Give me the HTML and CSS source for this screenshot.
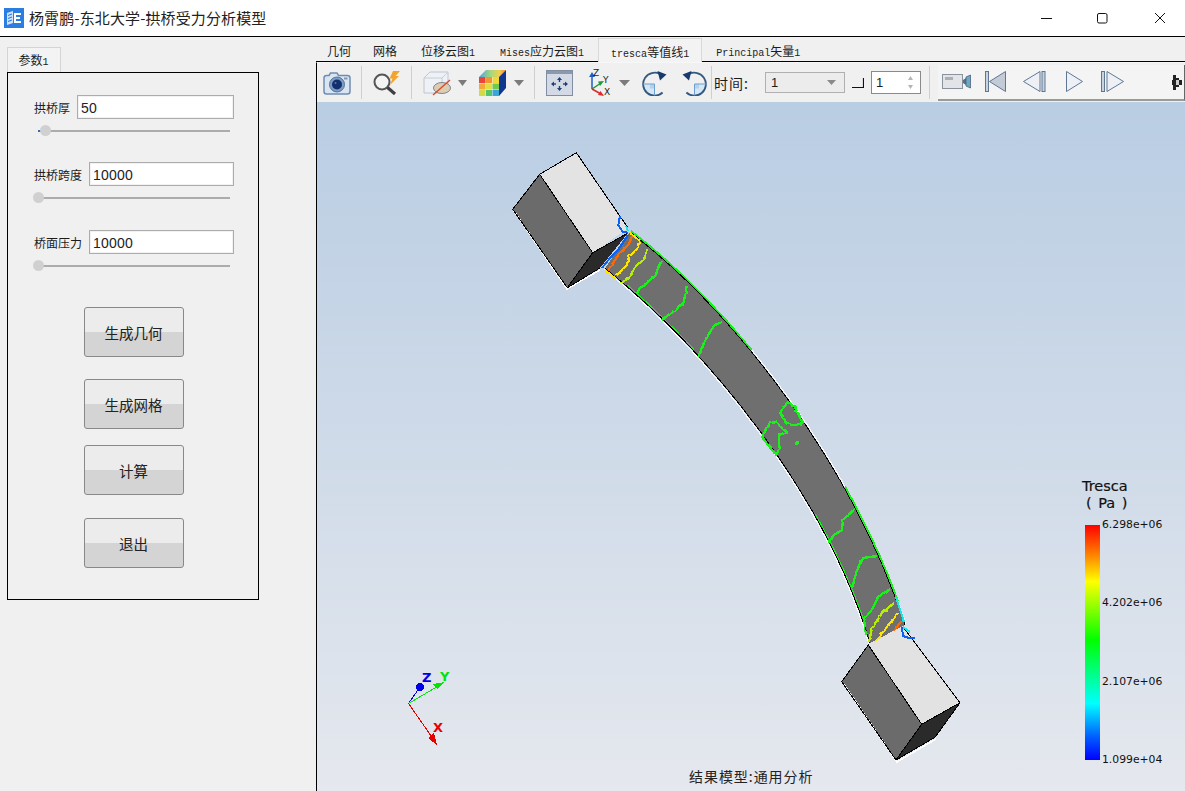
FILE: index.html
```html
<!DOCTYPE html>
<html lang="zh">
<head>
<meta charset="utf-8">
<title>杨霄鹏-东北大学-拱桥受力分析模型</title>
<link rel="stylesheet" href="styles.css">
</head>
<body>
<div class="window">
  <header class="titlebar">
    <svg class="app-icon" width="20" height="20" viewBox="0 0 20 20">
      <rect width="20" height="20" fill="#2b7de2"/>
      <path d="M3 5 9 3 9 15 3 17Z" fill="#cfe2fa"/>
      <path d="M4 7.500 8 6M4 10.500 8 9M4 13.500 8 12" stroke="#2b7de2" stroke-width="1.200"/>
      <path d="M10 5h7v2h-5v2h4v2h-4v2h5v2h-7Z" fill="#fff"/>
    </svg>
    <h1 class="app-title">杨霄鹏-东北大学-拱桥受力分析模型</h1>
    <div class="win-controls">
      <svg width="12" height="12" viewBox="0 0 12 12"><path d="M1 6.500H12" stroke="#111"/></svg>
      <svg width="12" height="12" viewBox="0 0 12 12"><rect x=".5" y="1.500" width="9.500" height="9.500" rx="1.500" fill="none" stroke="#111"/></svg>
      <svg width="12" height="12" viewBox="0 0 12 12"><path d="M1 1 11 11M11 1 1 11" stroke="#111"/></svg>
    </div>
  </header>

  <div class="workspace">
    <aside class="sidebar">
      <div class="side-tab">参数<span class="lat">1</span></div>
      <section class="side-panel">
        <div class="param param-first">
          <div class="param-row"><label class="param-label">拱桥厚</label><input class="param-input" value="50"></div>
          <div class="slider"><span class="slider-mark"></span><span class="slider-knob knob-offset"></span></div>
        </div>
        <div class="param">
          <div class="param-row"><label class="param-label">拱桥跨度</label><input class="param-input" value="10000"></div>
          <div class="slider"><span class="slider-knob"></span></div>
        </div>
        <div class="param">
          <div class="param-row"><label class="param-label">桥面压力</label><input class="param-input" value="10000"></div>
          <div class="slider"><span class="slider-knob"></span></div>
        </div>
        <div class="actions">
          <button class="action action-1">生成几何</button>
          <button class="action action-2">生成网格</button>
          <button class="action action-3">计算</button>
          <button class="action action-4">退出</button>
        </div>
      </section>
    </aside>

    <main class="result">
      <nav class="tabs">
        <span class="tab">几何</span>
        <span class="tab tab-b">网格</span>
        <span class="tab">位移云图<span class="lat">1</span></span>
        <span class="tab tab-d"><span class="lat">Mises</span>应力云图<span class="lat">1</span></span>
        <span class="tab tab-active"><span class="lat">tresca</span>等值线<span class="lat">1</span></span>
        <span class="tab tab-f"><span class="lat">Principal</span>矢量<span class="lat">1</span></span>
      </nav>

      <div class="toolbar">
        <svg class="ml6" width="28" height="24" viewBox="0 0 28 24">
          <path d="M3.500 4.500H6L7.500 2H14L15.500 4.500H24.500Q27 4.500 27 7V20.500Q27 23 24.500 23H3.500Q1 23 1 20.500V7Q1 4.500 3.500 4.500Z" fill="#dbe5f0" stroke="#6f8db2" stroke-width="1.500"/>
          <rect x="21" y="6.500" width="3.500" height="2" fill="#7e99bb"/>
          <circle cx="14" cy="13.500" r="7.500" fill="#7d9dc2" stroke="#4e75a4"/>
          <circle cx="14" cy="13.500" r="5" fill="#12306d"/>
          <circle cx="12.500" cy="12" r="1" fill="#5a7cb0"/>
        </svg>
        <span class="sep ml10"></span>
        <svg class="ml10" width="29" height="25" viewBox="0 0 29 25">
          <circle cx="10" cy="12" r="7.500" fill="#f2f4f6" stroke="#555" stroke-width="2"/>
          <path d="M15.500 17.500 23 24" stroke="#3f3f3f" stroke-width="3.200"/>
          <path d="M21 1 28 1 23.500 6 27 6 18 15 20.500 8.500 17.500 8.500Z" fill="#f4a42c"/>
        </svg>
        <span class="sep ml10"></span>
        <svg class="ml11" width="29" height="26" viewBox="0 0 29 26">
          <path d="M1 8 7 2H25V17L19 23H1Z" fill="#eef1f5" stroke="#bcc6d1"/>
          <path d="M1 8H19V23M19 8 25 2" fill="none" stroke="#c6ced8"/>
          <ellipse cx="19" cy="18" rx="8.500" ry="5.500" fill="#dccdb0" stroke="#7f8894"/>
          <path d="M10 25 27 10" stroke="#d8482c" stroke-width="1.300"/>
        </svg>
        <svg class="ml6" width="9" height="6" viewBox="0 0 9 6"><path d="M0 0H9L4.500 6Z" fill="#7b7b7b"/></svg>
        <svg class="ml12" width="27" height="26" viewBox="0 0 27 26">
          <defs>
            <linearGradient id="cubeTop" x1="0" x2="1" y1="0" y2="0"><stop offset="0" stop-color="#4aa8e0"/><stop offset=".45" stop-color="#a8d878"/><stop offset=".75" stop-color="#f0d050"/><stop offset="1" stop-color="#ee8a48"/></linearGradient>
          </defs>
          <path d="M7 0H27L20 7H0Z" fill="url(#cubeTop)"/>
          <path d="M20 7 27 0V18L20 26Z" fill="#10368d"/>
          <rect x="0" y="7" width="6.500" height="6" fill="#e9453a"/><rect x="7" y="7" width="6" height="6" fill="#f29431"/><rect x="13.500" y="7" width="6.500" height="6" fill="#f2d83a"/>
          <rect x="0" y="13.500" width="6.500" height="6" fill="#f2a83a"/><rect x="7" y="13.500" width="6" height="6" fill="#e6dd3f"/><rect x="13.500" y="13.500" width="6.500" height="6" fill="#73c94d"/>
          <rect x="0" y="20" width="6.500" height="6" fill="#d3d94a"/><rect x="7" y="20" width="6" height="6" fill="#54c469"/><rect x="13.500" y="20" width="6.500" height="6" fill="#3aa6d6"/>
        </svg>
        <svg class="ml8" width="10" height="6" viewBox="0 0 10 6"><path d="M0 0H10L5 6Z" fill="#7b7b7b"/></svg>
        <span class="sep ml10"></span>
        <svg class="ml11" width="27" height="26" viewBox="0 0 27 26">
          <rect x=".5" y=".5" width="26" height="25" fill="#d3dae5" stroke="#7f8ea3"/>
          <rect x="1" y="1" width="25" height="3" fill="#8c99ac"/>
          <g fill="#1f3f6f">
            <path d="M13.500 7 16 10H11ZM13.500 21 11 18H16ZM5 14 8 11.500V16.500ZM22 14 19 16.500V11.500Z"/>
            <rect x="12.800" y="10" width="1.400" height="2"/><rect x="12.800" y="16" width="1.400" height="2"/><rect x="8" y="13.300" width="2" height="1.400"/><rect x="17" y="13.300" width="2" height="1.400"/>
          </g>
        </svg>
        <svg class="ml16 tb-axes" width="23" height="28" viewBox="0 0 23 28">
          <path d="M3 20V7" stroke="#1d5fc4" stroke-width="1.500"/><path d="M3 3 6 8H0Z" fill="#1d5fc4"/>
          <path d="M3 20 12 14" stroke="#1d9a3a" stroke-width="1.500"/><path d="M15 12 11 17 9 12.500Z" fill="#1d9a3a"/>
          <path d="M3 20 12 25" stroke="#dd2a2a" stroke-width="1.500"/><path d="M15 27 9 26 11.500 22Z" fill="#dd2a2a"/>
          <text x="4" y="7" class="axis-mini">Z</text><text x="14" y="14" class="axis-mini">Y</text><text x="15" y="26" class="axis-mini">X</text>
        </svg>
        <svg class="ml7" width="11" height="6" viewBox="0 0 11 6"><path d="M0 0H11L5.500 6Z" fill="#7b7b7b"/></svg>
        <svg class="ml12" width="25" height="26" viewBox="0 0 25 26">
          <path d="M12.500 14H1A11.500 11.500 0 0 0 12.500 25.500Z" fill="#d5e6f5"/>
          <rect x="8" y="14" width="4.500" height="4.500" fill="#b5d2ec"/>
          <path d="M20.600 22.500A11.500 11.500 0 1 1 18 4" fill="none" stroke="#34597f" stroke-width="1.800"/>
          <path d="M1 14H12.500V25.500" fill="none" stroke="#6ea0cf"/>
          <path d="M15.500 1 24.500 4.500 18 10.500Z" fill="#173a6f"/>
        </svg>
        <svg class="ml14" width="26" height="26" viewBox="0 0 26 26">
          <path d="M13.500 14H25A11.500 11.500 0 0 1 13.500 25.500Z" fill="#d5e6f5"/>
          <rect x="13.500" y="14" width="4.500" height="4.500" fill="#b5d2ec"/>
          <path d="M5.400 22.500A11.500 11.500 0 1 0 8 4" fill="none" stroke="#34597f" stroke-width="1.800"/>
          <path d="M25 14H13.500V25.500" fill="none" stroke="#6ea0cf"/>
          <path d="M10.500 1 1.500 4.500 8 10.500Z" fill="#173a6f"/>
        </svg>
        <span class="sep ml4"></span>
        <span class="tb-label">时间:</span>
        <div class="combo"><span>1</span><svg width="9" height="5" viewBox="0 0 9 5"><path d="M0 0H9L4.500 5Z" fill="#8a8a8a"/></svg></div>
        <svg class="ml7" width="12" height="10" viewBox="0 0 12 10"><path d="M0 9.500H11.500V0" fill="none" stroke="#111" stroke-width="1.200"/></svg>
        <div class="spin"><span>1</span><svg width="5" height="13" viewBox="0 0 5 13"><path d="M2.500 0 5 4H0ZM2.500 13 0 9H5Z" fill="#b5b5b5"/></svg></div>
        <span class="sep ml8"></span>
        <div class="player">
          <svg width="29" height="15" viewBox="0 0 29 15">
            <rect x=".5" y=".5" width="20" height="14" fill="#e2e4e7" stroke="#8a929c"/>
            <rect x="3" y="3" width="8" height="3" fill="#aab0b8"/>
            <path d="M21 6 24 4V11L21 9Z" fill="#5a6d85"/>
            <path d="M24 3 28.500 1V14L24 12Z" fill="#6aa8c8" stroke="#4e627c" stroke-width=".8"/>
          </svg>
          <svg class="ml14" width="21" height="21" viewBox="0 0 21 21"><rect x=".5" y=".5" width="3" height="20" fill="#c8d3df" stroke="#5f7793"/><path d="M20.500 .5V20.500L4.500 10.500Z" fill="#c3ccd6" stroke="#5f7793"/></svg>
          <svg class="ml17" width="23" height="21" viewBox="0 0 23 21"><path d="M17 .5V20.500L.5 10.500Z" fill="#edf1f6" stroke="#5f7793"/><rect x="19" y=".5" width="3" height="20" fill="#c8d3df" stroke="#5f7793"/></svg>
          <svg class="ml20" width="17" height="21" viewBox="0 0 17 21"><path d="M.5 .5V20.500L16.500 10.500Z" fill="#edf1f6" stroke="#5f7793"/></svg>
          <svg class="ml18" width="23" height="21" viewBox="0 0 23 21"><rect x=".5" y=".5" width="3" height="20" fill="#c8d3df" stroke="#5f7793"/><path d="M6 .5V20.500L22.500 10.500Z" fill="#edf1f6" stroke="#5f7793"/></svg>
          <svg class="player-end" width="11" height="18" viewBox="0 0 11 18"><path d="M1 2H4V5H7V7H10V12H7V14H4V17H1V12H0V7H1Z" fill="#222"/><path d="M4 7H7V12H4Z" fill="#ccc"/></svg>
        </div>
      </div>

      <div class="viewport">
        <svg class="scene" width="868" height="689" viewBox="317 102 868 689">
          <defs>
            <filter id="jag" filterUnits="userSpaceOnUse" x="500" y="150" width="500" height="600">
              <feTurbulence type="fractalNoise" baseFrequency=".22" numOctaves="1" seed="4"/>
              <feDisplacementMap in="SourceGraphic" scale="3" xChannelSelector="R" yChannelSelector="G"/>
            </filter>
          </defs>
          <!-- left block -->
          <path d="M539.700 174.300 576.300 152.700 628.300 228.300 592.700 252.700Z" fill="#e3e3e3"/>
          <path d="M512.700 209.300 539.700 174.300 592.700 252.700 567.300 287.700Z" fill="#6b6b6b"/>
          <path d="M592.700 252.700 628 233 600 268 567.300 287.700Z" fill="#2a2a2a"/>
          <path d="M514 211 567 289 600 270" fill="none" stroke="#fff" stroke-width="1.500"/>
          <path d="M592.700 252.700 539.700 174.300 576.300 152.700 628.300 228.300M539.700 174.300 512.700 209.300 567.300 287.700 592.700 252.700 628 233M567.300 287.700 600 268" fill="none" stroke="#000"/>
          <!-- beam -->
          <path d="M630 232C736 313 853 466 905 625L870 643C824 490 705 348 605 268.300Z" fill="#6f6f6f"/>
          <path class="edge-white-up" d="M630 232C736 313 853 466 905 625" fill="none" stroke="#fff"/>
          <path class="edge-white-down" d="M605 268.300C705 348 824 490 870 643" fill="none" stroke="#fff"/>
          <path d="M630 232C736 313 853 466 905 625" fill="none" stroke="#000"/>
          <path d="M605 268.300C705 348 824 490 870 643" fill="none" stroke="#000"/>
          <path class="edge-green" d="M630 232C736 313 853 466 905 625" pathLength="100" stroke-dasharray="35 34 26 100" fill="none" stroke="#1ef01e" stroke-width="1.800"/>
          <path class="edge-green" d="M605 268.300C705 348 824 490 870 643" pathLength="100" stroke-dasharray="0 6 20 44 25 100" fill="none" stroke="#1ef01e"/>
          <!-- contours -->
          <g class="contours" fill="none" stroke-width="2.300" stroke-linejoin="round">
            <g stroke="#1ef01e">
              <path d="M661.700 260.700 658 268 656 275 650 280 645 285 640 288 636.700 294"/>
              <path d="M686.700 285.700 685 296 683.300 303.300 676 310 668.300 315 661.700 320"/>
              <path d="M721.700 321.700 714 326 708.300 335 703 345 698.300 356.700"/>
              <path d="M803 423 795 425 787 424 780 413 788 402 795 407 803 423"/>
              <path d="M762 437 770 423 776 422 782 428 787 432 779 435 779 450 776 455 762 437"/>
              <path d="M855 509 843 520 842 530 834 535 828 543"/>
              <path d="M877 556 863 558 857 570 852 588"/>
              <path d="M890 589 878 597 872 610 864 618 866 635"/>
            </g>
            <path stroke="#b6f000" d="M647.700 250 644 259.300 635 266.700 631 275 621.700 283.300"/>
            <path stroke="#b6f000" d="M894 603 882 613 872 628 869 642"/>
            <path stroke="#ffe600" d="M639.300 241.700 636.700 250 629.300 256 626.700 265 621 271 616.700 275"/>
            <path stroke="#ffe600" d="M898 613 887 627 875 642"/>
            <path stroke="#ff6a00" d="M632.300 236 628.300 245 618.300 255 608.300 270"/>
            <path stroke="#ff6a00" d="M902 621 893 631"/>
          </g>
          <g fill="none" stroke-width="2">
            <path stroke="#ffe600" d="M605 270 616 279 M630 233 640 241"/>
            <path stroke="#0a62f5" d="M620 216 618.300 225 622.700 231.700 628.300 232.700"/>
            <path stroke="#0a62f5" d="M628 235 618 250 610 258 602 268"/>
            <path stroke="#19e6e6" d="M626 226 628 231"/>
          </g>
          <circle cx="797" cy="443" r="2" fill="#1ef01e"/>
          <!-- right block -->
          <path d="M868.300 645 903 626.700 960 702.700 921.700 724.300Z" fill="#e2e2e2"/>
          <path d="M841.700 681.700 868.300 645 921.700 724.300 896 760Z" fill="#6b6b6b"/>
          <path d="M921.700 724.300 960 702.700 935 737.300 896 760Z" fill="#2a2a2a"/>
          <path d="M843 683 897 762 936 739" fill="none" stroke="#fff" stroke-width="1.500"/>
          <path d="M921.700 724.300 868.300 645 841.700 681.700 896 760 921.700 724.300 960 702.700 903 626.700M896 760 935 737.300 960 702.700" fill="none" stroke="#000"/>
          <g fill="none" stroke-width="2">
            <path stroke="#0a62f5" d="M902 627 903 636 909 638 915 638"/>
            <path stroke="#19e6e6" d="M903 627 910 632M896 597 904 622"/>
          </g>
          <!-- triad -->
          <path d="M408.500 703.500 420 687" stroke="#0000e6" fill="none"/>
          <path d="M408.500 703.500 440 685" stroke="#00e600" fill="none"/>
          <path d="M408.500 703.500 436 743" stroke="#e60000" fill="none"/>
          <circle cx="420" cy="687" r="4" fill="#0000e6"/>
          <path d="M445 682 437 689 433 684Z" fill="#00e600"/>
          <path d="M437 745 428 738 434 733Z" fill="#e60000"/>
          <text x="422" y="682" class="axis-label axis-z">Z</text>
          <text x="440" y="681" class="axis-label axis-y">Y</text>
          <text x="433" y="732" class="axis-label axis-x">X</text>
        </svg>
        <div class="legend">
          <div class="legend-title">Tresca<br><span class="legend-unit">( Pa )</span></div>
          <div class="legend-body">
            <div class="legend-bar"></div>
            <ul class="legend-ticks">
              <li>6.298e+06</li>
              <li>4.202e+06</li>
              <li>2.107e+06</li>
              <li>1.099e+04</li>
            </ul>
          </div>
        </div>
        <div class="caption">结果模型:通用分析</div>
      </div>
    </main>
  </div>
</div>
</body>
</html>
```

FILE: styles.css
```css
* { box-sizing: border-box; }
html, body { margin: 0; padding: 0; }
body {
  width: 1185px;
  height: 791px;
  overflow: hidden;
  background: #f0f0f0;
  color: #1c1c1c;
  font-family: "Noto Sans CJK SC", "Noto Sans", sans-serif;
}
.window { display: flex; flex-direction: column; height: 791px; }

.titlebar {
  display: flex;
  align-items: center;
  height: 37px;
  flex: none;
  padding-left: 4px;
  background: #fff;
  border-bottom: 1px solid #000;
}
.app-title { margin: 0 0 0 5px; font-size: 15px; font-weight: 400; letter-spacing: .12px; color: #222; line-height: 36px; }
.win-controls { display: flex; gap: 45px; margin-left: auto; margin-right: 19px; }

.workspace { display: flex; flex: 1; min-height: 0; }
.lat { font-family: "Liberation Mono", monospace; font-size: 10px; }

.sidebar { width: 316px; flex: none; padding: 10px 0 0 7px; }
.side-tab {
  width: 54px;
  height: 25px;
  border: 1px solid #d4d4d4;
  border-bottom: 0;
  background: #f3f3f3;
  font-size: 12px;
  line-height: 24px;
  padding-right: 1px;
  text-align: center;
}
.side-panel {
  width: 252px;
  height: 528px;
  border: 1px solid #000;
  padding: 22px 24px 0 26px;
}
.param { height: 68px; }
.param-first { height: 67px; }
.param-row { display: flex; align-items: center; justify-content: space-between; height: 24px; }
.param-label { font-size: 12px; white-space: nowrap; }
.param-input {
  flex: 1;
  height: 24px;
  min-width: 0;
  margin-left: 7px;
  padding: 1px 3px 0;
  border: 1px solid #acacac;
  outline: 1px solid #f2f2f2;
  outline-offset: -2px;
  border-radius: 0;
  background: #fff;
  color: #222;
  font-family: "Liberation Sans", sans-serif;
  font-size: 14px;
  letter-spacing: .2px;
}
.slider {
  position: relative;
  width: 192px;
  height: 2px;
  margin: 11px 0 0 4px;
  background: #acacac;
}
.slider-knob {
  position: absolute;
  left: -5px;
  top: -5px;
  width: 11px;
  height: 11px;
  border-radius: 50%;
  background: #d0d0d0;
}
.knob-offset { left: 2px; }
.slider-mark { position: absolute; left: 0; top: 0; width: 3px; height: 2px; background: #2f6fb5; }

.actions { display: flex; flex-direction: column; align-items: center; padding-top: 9px; margin-left: -1px; }
.action {
  width: 100px;
  height: 50px;
  padding: 0;
  border: 1px solid #888;
  border-radius: 3px;
  background: linear-gradient(#ececec 0 50%, #d4d4d4 50% 100%);
  color: #222;
  font-family: inherit;
  font-size: 14.500px;
}
.action-2 { margin-top: 22px; }
.action-3 { margin-top: 16px; }
.action-4 { margin-top: 23px; }

.result { flex: 1; display: flex; flex-direction: column; min-width: 0; }
.tabs {
  display: flex;
  height: 25px;
  flex: none;
  border-bottom: 1px solid #000;
  font-size: 12px;
  line-height: 28px;
  color: #1c1c1c;
  white-space: nowrap;
}
.tab { padding: 0 12px 0 11px; }
.tab-b { padding: 0 13px 0 10px; }
.tab-d { padding: 0 0 0 13px; }
.tab-active {
  margin: 1px 0 -1px 14px;
  padding: 0 12px;
  line-height: 26px;
  background: #f3f3f3;
  border: 1px solid #d8d8d8;
  border-bottom: 0;
}
.tab-f { padding-left: 14px; }

.toolbar {
  display: flex;
  align-items: center;
  height: 40px;
  flex: none;
  border-left: 1px solid #000;
  background: #f0f0f0;
  border-top: 1px solid #f7f7f7;
}
.sep { width: 1px; height: 33px; background: #cfcfcf; flex: none; }
.ml4 { margin-left: 4px; }
.ml6 { margin-left: 6px; }
.ml7 { margin-left: 7px; }
.ml8 { margin-left: 8px; }
.ml10 { margin-left: 10px; }
.ml11 { margin-left: 11px; }
.ml12 { margin-left: 12px; }
.ml14 { margin-left: 14px; }
.ml16 { margin-left: 16px; }
.ml17 { margin-left: 17px; }
.ml18 { margin-left: 18px; }
.ml20 { margin-left: 20px; }
svg { flex: none; display: block; }
.axis-mini { font: 400 9px "DejaVu Sans", sans-serif; fill: #222; }
.tb-label { margin-left: 2px; font-size: 14px; letter-spacing: 1px; width: 36px; white-space: nowrap; }
.combo {
  display: flex;
  align-items: center;
  justify-content: space-between;
  width: 80px;
  height: 21px;
  margin-left: 15px;
  padding: 0 8px 0 5px;
  border: 1px solid #b0b0b0;
  background: #ececec;
  font: 13px "Liberation Sans", sans-serif;
}
.spin {
  display: flex;
  align-items: center;
  justify-content: space-between;
  width: 50px;
  height: 23px;
  margin-left: 7px;
  padding: 0 7px 0 4px;
  border: 1px solid #8a8a8a;
  background: #fff;
  font: 13px "Liberation Sans", sans-serif;
}
.player {
  display: flex;
  align-items: center;
  flex: 1;
  height: 36px;
  margin-left: 8px;
  padding-left: 4px;
  background: #f4f4f4;
  border-bottom: 2px solid #9a9a9a;
  border-right: 1px solid #666;
  min-width: 0;
}
.player-end { margin-left: auto; margin-right: 1px; }

.viewport {
  position: relative;
  flex: 1;
  min-height: 0;
  border-left: 1px solid #000;
  background: linear-gradient(#b9cde3, #e5e8ee);
  overflow: hidden;
}
.scene { position: absolute; left: 0; top: 0; shape-rendering: crispEdges; }
.contours { filter: url(#jag); }
.edge-white-up { transform: translate(1px, -1px); }
.edge-white-down { transform: translate(-1px, 1px); }
.edge-green { transform: translate(1px, -1px); }
.axis-label { font: 700 13px "DejaVu Sans", sans-serif; }
.axis-z { fill: #0000e6; }
.axis-y { fill: #00e600; }
.axis-x { fill: #e60000; }

.legend {
  position: absolute;
  left: 765px;
  top: 376px;
  width: 103px;
  font-family: "DejaVu Sans", sans-serif;
  color: #111;
}
.legend-title { height: 47px; font-size: 14.500px; line-height: 17px; white-space: nowrap; -webkit-text-stroke: .2px #111; }
.legend-unit { padding-left: 4px; word-spacing: 2px; }
.legend-body { display: flex; height: 235px; padding-left: 3px; }
.legend-bar {
  width: 15px;
  height: 235px;
  background: linear-gradient(#f00 0%, #ff9000 14%, #ff0 24%, #0f0 49%, #0ff 76%, #0060ff 90%, #00f 100%);
}
.legend-ticks {
  list-style: none;
  margin: -7px 0 -7px 2px;
  padding: 0;
  display: flex;
  flex-direction: column;
  justify-content: space-between;
  font-size: 10.800px;
  line-height: 14px;
  height: 249px;
}
.caption {
  position: absolute;
  left: 372px;
  bottom: 5px;
  font-size: 14px;
  letter-spacing: .95px;
  line-height: 20px;
  color: #222;
}
```
